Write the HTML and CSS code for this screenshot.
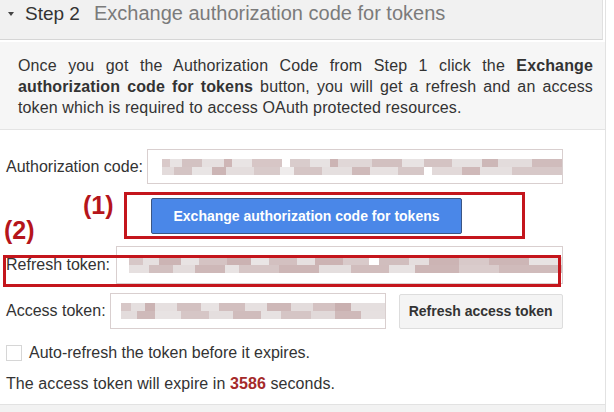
FILE: index.html
```html
<!DOCTYPE html>
<html>
<head>
<meta charset="utf-8">
<link rel="stylesheet" href="styles.css">
</head>
<body>
<div class="panel">
  <div class="head">
    <span class="caret"></span>
    <span class="step">Step 2</span>
    <span class="title">Exchange authorization code for tokens</span>
  </div>
  <div class="desc">Once you got the Authorization Code from Step 1 click the <b>Exchange authorization code for tokens</b> button, you will get a refresh and an access token which is required to access OAuth protected resources.</div>
  <div class="form">
    <div class="row r1">
      <label>Authorization code:</label>
      <div class="field wide"><span class="blur bl1"></span></div>
    </div>
    <div class="row r2">
      <button class="primary">Exchange authorization code for tokens</button>
    </div>
    <div class="row r3">
      <label>Refresh token:</label>
      <div class="field wide"><span class="blur bl2"></span></div>
    </div>
    <div class="row r4">
      <label>Access token:</label>
      <div class="field mid"><span class="blur bl3"></span></div>
      <button class="secondary">Refresh access token</button>
    </div>
    <div class="row r5">
      <span class="box"></span>
      <span>Auto-refresh the token before it expires.</span>
    </div>
    <div class="expire">The access token will expire in <span class="num">3586</span> seconds.</div>

    <div class="mark box1"></div>
    <div class="tag tag1">(1)</div>
    <div class="mark box2"></div>
    <div class="tag tag2">(2)</div>
  </div>
  <div class="foot"></div>
</div>
</body>
</html>
```

FILE: styles.css
```css
html, body {
  margin: 0;
  padding: 0;
  background: #ffffff;
}
body {
  font-family: "Liberation Sans", Arial, sans-serif;
  color: #333;
  width: 614px;
  height: 412px;
  overflow: hidden;
}
.panel {
  width: 606px;
  border-right: 1px solid #e2e2e2;
  box-sizing: border-box;
}
.head {
  height: 40px;
  background: #f1f1f1;
  border-bottom: 1px solid #d6d6d6;
  border-right: 1px solid #e0e0e0;
  margin-right: 2px;
  display: flex;
  align-items: center;
  padding-left: 8px;
  box-sizing: border-box;
  margin-bottom: 2px;
}
.caret {
  width: 0;
  height: 0;
  border-left: 3.5px solid transparent;
  border-right: 3.5px solid transparent;
  border-top: 4px solid #444;
  margin-right: 11px;
  margin-top: -12px;
}
.step {
  font-size: 19px;
  color: #333;
  margin-right: 14px;
  margin-top: -12px;
}
.title {
  font-size: 20px;
  color: #7b7b7b;
  margin-top: -12px;
}
.desc {
  background: #f6f6f6;
  border-bottom: 1px solid #e4e4e4;
  padding: 13px 12px 17px 18px;
  font-size: 16px;
  line-height: 21px;
  letter-spacing: 0.13px;
  text-align: justify;
  color: #333;
  height: 88px;
  box-sizing: border-box;
}
.desc b {
  color: #333;
}
.form {
  position: relative;
  padding: 19px 0 0 6px;
  height: 274px;
  box-sizing: border-box;
  font-size: 16px;
}
.row {
  display: flex;
  align-items: center;
}
.row label {
  margin-right: 4px;
  color: #333;
}
.field {
  height: 35px;
  border: 1px solid #d9cfcf;
  box-sizing: border-box;
  display: flex;
  align-items: center;
  padding-left: 14px;
  overflow: hidden;
  background: #fff;
}
.wide {
  flex: 1;
  margin-right: 42px;
}
.mid {
  width: 276px;
  padding-left: 10px;
}
.blur {
  display: block;
  height: 16px;
  flex: 1;
}
.bl1 {
  background:
    linear-gradient(90deg, #d9c9c9 0 8px, #e8e3e3 8px 20px, #d3c2c2 20px 40px, #e6e0e0 40px 62px, #ceb6b6 62px 70px, #e9e4e4 70px 90px, #d7c6c6 90px 120px, #fff 120px 128px, #d9cccc 128px 148px, #e7e2e2 148px 168px, #ccb4b4 168px 176px, #e0d7d7 176px 210px, #d2c0c0 210px 240px, #e8e3e3 240px 262px, #d4c3c3 262px 290px, #e6e1e1 290px 320px, #cdb7b7 320px 336px, #e3dcdc 336px 370px, #d0bcbc 370px 401px) top / 100% 50% no-repeat,
    linear-gradient(90deg, #e3dbdb 0 12px, #d4c4c4 12px 30px, #e9e5e5 30px 50px, #ccb5b5 50px 64px, #e4dddd 64px 92px, #d8caca 92px 118px, #efecec 118px 132px, #d5c5c5 132px 160px, #e5dfdf 160px 190px, #cfbaba 190px 208px, #e7e1e1 208px 236px, #d6c7c7 236px 262px, #fff 262px 270px, #e2d9d9 270px 300px, #cfb9b9 300px 318px, #e6e0e0 318px 350px, #d7c8c8 350px 401px) bottom / 100% 50% no-repeat;
}
.bl2 {
  background:
    linear-gradient(90deg, #d7c7c7 0 14px, #e6e0e0 14px 30px, #ccb4b4 30px 52px, #e8e3e3 52px 70px, #d5c3c3 70px 98px, #cbb2b2 98px 122px, #e9e5e5 122px 140px, #d3c0c0 140px 168px, #e6e0e0 168px 186px, #ccb3b3 186px 214px, #d9caca 214px 240px, #fff 240px 250px, #d1bebe 250px 280px, #e5dede 280px 300px, #ccb4b4 300px 330px, #d8c9c9 330px 360px, #cdb6b6 360px 400px, #e8e3e3 400px 430px) top / 100% 50% no-repeat,
    linear-gradient(90deg, #e6e0e0 0 20px, #d2c0c0 20px 44px, #e3dcdc 44px 66px, #ceb8b8 66px 96px, #e8e3e3 96px 110px, #d6c6c6 110px 150px, #cdb6b6 150px 190px, #e4dede 190px 222px, #d1bdbd 222px 260px, #e7e2e2 260px 286px, #cdb6b6 286px 330px, #dacccc 330px 370px, #d0bbbb 370px 430px) bottom / 100% 50% no-repeat;
}
.bl3 {
  background:
    linear-gradient(90deg, #d7c7c7 0 10px, #e5dfdf 10px 24px, #cbb3b3 24px 34px, #e6e0e0 34px 56px, #d3c1c1 56px 80px, #e8e3e3 80px 98px, #d2bfbf 98px 124px, #e6e0e0 124px 146px, #ceb8b8 146px 170px, #e3dcdc 170px 192px, #d4c2c2 192px 214px, #c9b0b0 214px 230px, #e5dfdf 230px 262px) top / 100% 50% no-repeat,
    linear-gradient(90deg, #e3dcdc 0 16px, #cfbaba 16px 34px, #e8e3e3 34px 60px, #d6c6c6 60px 88px, #e4dede 88px 112px, #d0bcbc 112px 140px, #e7e2e2 140px 160px, #d5c5c5 160px 190px, #e1d9d9 190px 214px, #cfb9b9 214px 240px, #e6e0e0 240px 262px) bottom / 100% 50% no-repeat;
}
.r2 {
  margin-top: 14px;
  padding-left: 145px;
}
.primary {
  height: 36px;
  width: 311px;
  background: #4a87e8;
  border: 1px solid #3b5684;
  border-radius: 2px;
  color: #fff;
  font-family: "Liberation Sans", Arial, sans-serif;
  font-weight: bold;
  font-size: 14px;
  padding: 0;
}
.r3 {
  margin-top: 12px;
}
.r3 label {
  margin-right: 6px;
}
.r3 .field {
  height: 38px;
  padding-left: 12px;
}
.r4 {
  margin-top: 9px;
}
.r4 .field {
  height: 36px;
}
.secondary {
  margin-left: 13px;
  height: 35px;
  width: 164px;
  background: #f4f4f4;
  border: 1px solid #dddddd;
  border-radius: 2px;
  color: #333;
  font-family: "Liberation Sans", Arial, sans-serif;
  font-weight: bold;
  font-size: 14px;
  padding: 0;
}
.r5 {
  margin-top: 15px;
}
.box {
  width: 16px;
  height: 16px;
  border: 1px solid #d6d6d6;
  box-sizing: border-box;
  background: #fff;
  margin-right: 7px;
  margin-left: 0;
}
.expire {
  margin-top: 12px;
  line-height: 20px;
  letter-spacing: 0.08px;
}
.num {
  color: #a52a2a;
  font-weight: bold;
}
.mark {
  position: absolute;
  border: 3px solid #c4151c;
  box-sizing: border-box;
}
.box1 {
  left: 124px;
  top: 62px;
  width: 401px;
  height: 47px;
}
.box2 {
  left: 3px;
  top: 125px;
  width: 558px;
  height: 32px;
}
.tag {
  position: absolute;
  color: #b5151b;
  font-weight: bold;
  font-size: 25px;
  line-height: 25px;
  font-family: "Liberation Sans", Arial, sans-serif;
}
.tag1 {
  left: 83px;
  top: 63px;
}
.tag2 {
  left: 4px;
  top: 88px;
}
.foot {
  height: 7px;
  border-top: 1px solid #e2e2e2;
  background: #f2f2f2;
}
```
